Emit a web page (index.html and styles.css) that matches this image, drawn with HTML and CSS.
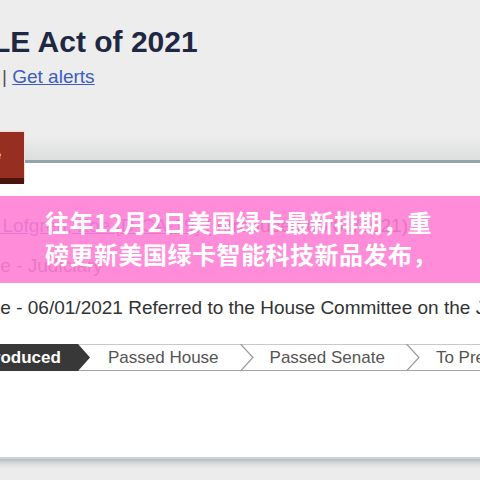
FILE: index.html
```html
<!DOCTYPE html>
<html lang="en">
<head>
<meta charset="utf-8">
<title>LE Act of 2021</title>
<link rel="stylesheet" href="styles.css">
</head>
<body>
<div class="page">
  <header class="hero">
    <h1 class="title">LE Act of 2021</h1>
    <div class="links"><span class="bar">|</span> <a class="link" href="#">Get alerts</a></div>
  </header>
  <a class="vote-btn" href="#"><span class="vote-label">Vote</span></a>
  <main class="panel">
    <div class="row sponsor"><a class="link" href="#">Rep. Lofgren, Zoe [D-CA-19]</a> (Introduced 06/01/2021)</div>
    <div class="row committees">House - Judiciary</div>
    <div class="row action">House - 06/01/2021 Referred to the House Committee on the Judiciary.</div>
    <ol class="tracker">
      <li class="step current">Introduced</li>
      <li class="step">Passed House</li>
      <li class="chev"><svg width="14" height="27" viewBox="0 0 14 27"><polyline points="0.5,0 13,13.5 0.5,27" fill="none" stroke="#9a9a9a" stroke-width="1.2"/></svg></li>
      <li class="step">Passed Senate</li>
      <li class="chev"><svg width="14" height="27" viewBox="0 0 14 27"><polyline points="0.5,0 13,13.5 0.5,27" fill="none" stroke="#9a9a9a" stroke-width="1.2"/></svg></li>
      <li class="step">To President</li>
    </ol>
  </main>
  <div class="foot"></div>
  <div class="banner">往年12月2日美国绿卡最新排期，重<br>磅更新美国绿卡智能科技新品发布，</div>
</div>
</body>
</html>
```
FILE: styles.css
```css
html, body {
  margin: 0;
  padding: 0;
}
body {
  width: 480px;
  height: 480px;
  overflow: hidden;
  background: #ececec;
  font-family: "Liberation Sans", Arial, sans-serif;
}
.page {
  position: relative;
  width: 480px;
  height: 480px;
  overflow: hidden;
}
.hero {
  height: 160px;
  background: linear-gradient(to bottom, #ededed 0, #ededed 136px, #dcdddd 160px);
  overflow: hidden;
}
.title {
  margin: 25px 0 0 -8px;
  font-size: 30px;
  line-height: 34px;
  font-weight: 700;
  color: #1f2842;
  white-space: nowrap;
}
.links {
  margin: 7px 0 0 2px;
  font-size: 19px;
  line-height: 22px;
  color: #555;
}
.link {
  color: #3c5cc0;
  text-decoration: underline;
}
.vote-btn {
  position: absolute;
  left: -60px;
  top: 132px;
  width: 84px;
  height: 52px;
  box-sizing: border-box;
  background: #962f21;
  border-bottom: 6px solid #4a140d;
  box-shadow: 1px -1px 0 #f3ddd8;
  text-decoration: none;
  display: flex;
  align-items: center;
  justify-content: flex-end;
  padding-right: 23px;
}
.vote-label {
  color: #fff;
  font-size: 14px;
  font-weight: 700;
}
.panel {
  background: #fff;
  border-top: 3px solid #93a3ac;
  border-bottom: 2px solid #c6d3d9;
  padding-top: 51px;
  height: 243px;
  overflow: hidden;
}
.row {
  font-size: 19px;
  line-height: 24px;
  white-space: nowrap;
}
.sponsor {
  margin-left: -43px;
  color: #333;
}
.committees {
  margin-top: 16px;
  margin-left: -44px;
  color: #555;
}
.action {
  margin-top: 18px;
  margin-left: -44px;
  color: #333;
}
.tracker {
  list-style: none;
  margin: 24px 0 0 0;
  padding: 0;
  display: flex;
  height: 25px;
  border-top: 1px solid #c9c9c9;
  border-bottom: 1px solid #a3a3a3;
  white-space: nowrap;
}
.step {
  flex-shrink: 0;
  font-size: 17px;
  line-height: 25px;
  color: #555;
  padding: 0 21px 0 18px;
}
.step.current {
  margin: -1px 0 -1px -27px;
  height: 27px;
  line-height: 27px;
  width: 117px;
  box-sizing: border-box;
  padding: 0;
  background: #383838;
  color: #fff;
  font-weight: 700;
  clip-path: polygon(0 0, 105px 0, 117px 50%, 105px 100%, 0 100%);
}
.chev {
  flex-shrink: 0;
  margin: -1px 0;
  height: 27px;
  display: flex;
}
.chev + .step {
  padding-left: 16px;
}
.foot {
  height: 21px;
  background: linear-gradient(to bottom, #b9bdbf 0, #dcdede 5px, #ececec 10px);
}
.banner {
  position: absolute;
  left: 0;
  right: 0;
  top: 196px;
  padding: 10px 0 13px 45px;
  background: rgba(255, 124, 212, 0.88);
  color: #fff;
  font-family: "Noto Sans CJK SC", sans-serif;
  font-weight: 700;
  font-size: 24px;
  letter-spacing: 0.5px;
  line-height: 32px;
  white-space: nowrap;
}
```
